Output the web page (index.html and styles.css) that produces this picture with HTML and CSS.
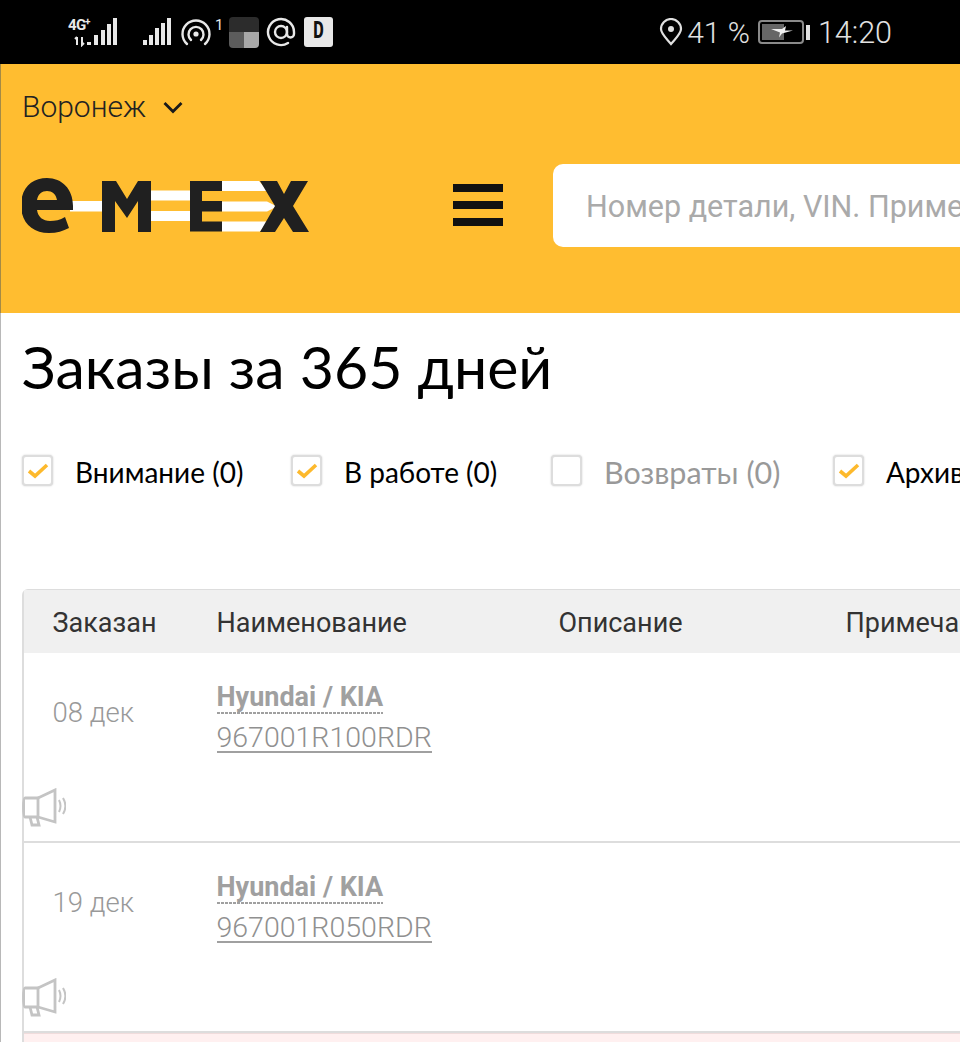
FILE: index.html
```html
<!DOCTYPE html>
<html lang="ru">
<head>
<meta charset="utf-8">
<title>Заказы</title>
<link rel="stylesheet" href="styles.css">
</head>
<body>
<div class="statusbar">
  <div class="status-left">
    <div class="net">
      <span class="net-4g">4G</span><span class="net-plus">+</span>
      <svg class="net-bars" width="50" height="30" viewBox="0 0 50 30"><g fill="#e8e8e8"><rect x="19" y="25" width="4" height="3"/><rect x="26" y="18" width="4" height="10"/><rect x="33" y="13" width="4" height="15"/><rect x="39" y="7" width="4" height="21"/><rect x="45" y="1" width="4" height="27"/></g><path d="M9 28V20M7 22l2-2M14 20v8l2-2" stroke="#e8e8e8" stroke-width="2" fill="none"/></svg>
    </div>
    <svg class="ic-sig" width="30" height="30" viewBox="0 0 30 30"><g fill="#e8e8e8"><rect x="1" y="23" width="4" height="5"/><rect x="7" y="18" width="4" height="10"/><rect x="13" y="11" width="4" height="17"/><rect x="19" y="6" width="4" height="22"/><rect x="25" y="1" width="4" height="27"/></g></svg>
    <svg class="ic-wifi" width="32" height="30" viewBox="0 0 32 30"><g fill="none" stroke="#e8e8e8" stroke-width="2.400" stroke-linecap="round"><path d="M7 27a13.500 13.500 0 1 1 18 0"/><path d="M11 23a7.500 7.500 0 1 1 10 0"/></g><circle cx="16" cy="17" r="2.600" fill="#e8e8e8"/></svg>
    <span class="sup">1</span>
    <div class="tile"><div class="tile-top"></div><div class="tile-bl"></div><div class="tile-br"></div></div>
    <svg class="ic-at" width="30" height="30" viewBox="0 0 30 30"><g fill="none" stroke="#e8e8e8" stroke-width="2.400" stroke-linecap="round"><circle cx="15" cy="15" r="6"/><path d="M21 10v7a3.500 3.500 0 0 0 7 0v-2a13 13 0 1 0-6 11"/></g></svg>
    <div class="dbadge"><span>D</span></div>
  </div>
  <div class="status-right">
    <svg class="ic-pin" width="24" height="28" viewBox="0 0 24 28"><path d="M12 26C6 19 2 15.500 2 11a10 10 0 0 1 20 0c0 4.500-4 8-10 15z" fill="none" stroke="#e0e0e0" stroke-width="2.200"/><circle cx="12" cy="11" r="3" fill="#e0e0e0"/></svg>
    <span class="st-text pct">41 %</span>
    <div class="battery"><div class="battery-fill"></div><svg class="bolt" width="24" height="12" viewBox="0 0 24 12"><path d="M1 3h11l4-3-1 4.500h8l-11 3-3 4 1-5z" fill="#f0f0f0"/></svg></div>
    <div class="battery-tip"></div>
    <span class="st-text time">14:20</span>
  </div>
</div>

<header class="header">
  <div class="city"><span>Воронеж</span>
    <svg width="22" height="14" viewBox="0 0 22 14"><path d="M2.500 3l8.500 8.500L19.500 3" fill="none" stroke="#1a1a1a" stroke-width="2.800"/></svg>
  </div>
  <div class="header-main">
    <svg class="logo" width="288" height="56" viewBox="22 177 288 56">
      <g fill="#fff">
        <rect x="70" y="200" width="34" height="10.500"/>
        <rect x="149" y="189.500" width="43" height="10"/>
        <rect x="149" y="210" width="43" height="10"/>
        <path d="M222 180h37l9 10h-46zM222 200.500h45l10 5-10 5h-45zM222 220.500h46l-8 10h-38z"/>
      </g>
      <g fill="#202020">
        <path d="M47 177c15 0 26 11 26 28v4H37c1 7 6 11 13 11 5 0 10-1 15-4l4 11c-6 3-12 5-20 5-17 0-28-11-28-28s11-27 26-27zm0 13c-5 0-9 3-10 9h20c-1-6-5-9-10-9z"/>
        <path d="M102 180h14l11 18 11-18h13v51h-13v-31l-11 17-12-17v31h-13z"/>
        <path d="M190 180h32v10h-20v10h20v10.500h-20v10h20v10h-32z"/>
        <path d="M260 180h17l7 13 7-13h17l-15 25 16 26h-16l-9-14-9 14h-15l15-26z"/>
      </g>
    </svg>
    <div class="burger"><i></i><i></i><i></i></div>
    <div class="search">Номер детали, VIN. Пример: 21126100708682</div>
  </div>
</header>

<main class="content">
  <h1>Заказы за 365 дней</h1>
  <div class="filters">
    <label class="filter f1"><span class="box"><svg width="22" height="16" viewBox="0 0 22 16"><path d="M2 8l6 5L20 2" fill="none" stroke="#fdb92c" stroke-width="3.600"/></svg></span>Внимание (0)</label>
    <label class="filter f2"><span class="box"><svg width="22" height="16" viewBox="0 0 22 16"><path d="M2 8l6 5L20 2" fill="none" stroke="#fdb92c" stroke-width="3.600"/></svg></span>В работе (0)</label>
    <label class="filter f3"><span class="box"></span>Возвраты (0)</label>
    <label class="filter f4"><span class="box"><svg width="22" height="16" viewBox="0 0 22 16"><path d="M2 8l6 5L20 2" fill="none" stroke="#fdb92c" stroke-width="3.600"/></svg></span>Архив (0)</label>
  </div>
  <div class="table">
    <div class="row head"><div>Заказан</div><div>Наименование</div><div>Описание</div><div>Примечание</div></div>
    <div class="order">
      <div class="row"><div class="date">08 дек</div><div><a class="brand">Hyundai / KIA</a><a class="part">967001R100RDR</a></div></div>
      <svg class="horn" width="44" height="40" viewBox="0 0 44 40"><g fill="none" stroke="#c4c4c4" stroke-width="2.800"><path d="M3 10h13v19H3c-2 0-2-19 0-19z"/><path d="M16 10L33 2v32L16 29"/><path d="M8 29l2 8h7l-2-8"/><path d="M37 12c2 4 2 8 0 12M41 10c3 5 3 11 0 16" stroke-width="2"/></g></svg>
    </div>
    <div class="order">
      <div class="row"><div class="date">19 дек</div><div><a class="brand">Hyundai / KIA</a><a class="part">967001R050RDR</a></div></div>
      <svg class="horn" width="44" height="40" viewBox="0 0 44 40"><g fill="none" stroke="#c4c4c4" stroke-width="2.800"><path d="M3 10h13v19H3c-2 0-2-19 0-19z"/><path d="M16 10L33 2v32L16 29"/><path d="M8 29l2 8h7l-2-8"/><path d="M37 12c2 4 2 8 0 12M41 10c3 5 3 11 0 16" stroke-width="2"/></g></svg>
    </div>
    <div class="order pink"></div>
  </div>
</main>
</body>
</html>
```

FILE: styles.css
```css
* { box-sizing: border-box; }
html, body { margin: 0; height: 1042px; overflow: hidden; background: #fff; }
body { font-family: Roboto, "Noto Sans", sans-serif; color: #111; }

.statusbar { height: 64px; background: #000; display: flex; justify-content: space-between; align-items: center; padding: 0 68px; }
.status-left { display: flex; align-items: center; }
.status-right { display: flex; align-items: center; }
.net { position: relative; width: 50px; height: 30px; }
.net-bars { display: block; }
.net-4g { position: absolute; left: 0; top: 1px; color: #e8e8e8; font-size: 15px; line-height: 15px; font-weight: 700; letter-spacing: -.5px; }
.net-plus { position: absolute; left: 17px; top: 0; color: #e8e8e8; font-size: 10px; line-height: 10px; font-weight: 700; }
.ic-sig { margin-left: 24px; }
.ic-wifi { margin-left: 8px; }
.sup { color: #e8e8e8; font-size: 15px; line-height: 15px; width: 14px; margin: -14px 0 0 3px; }
.tile { width: 30px; height: 31px; border-radius: 4px; overflow: hidden; display: grid; grid-template-columns: 1fr 1fr; grid-template-rows: 15px 16px; }
.tile-top { grid-column: 1 / 3; background: #2c2c2c; }
.tile-bl { background: #5c5c5c; }
.tile-br { background: #a8a8a8; }
.ic-at { margin-left: 7px; }
.dbadge { width: 29px; height: 30px; margin-left: 8px; background: #e8e8e8; border-radius: 3px; color: #111; font: 700 25px/30px "Liberation Mono", monospace; text-align: center; }
.dbadge span { display: inline-block; transform: scaleX(.72); }
.st-text { color: #e2e2e2; font-size: 30.500px; font-weight: 300; line-height: 64px; padding-top: 2px; }
.pct { margin-left: 4px; font-size: 30px; }
.battery { position: relative; width: 46px; height: 24px; margin-left: 8px; border: 2px solid #8a8a8a; border-radius: 4px; padding: 2px; }
.battery-fill { width: 22px; height: 100%; background: #666; }
.bolt { position: absolute; left: 10px; top: 4px; }
.battery-tip { width: 4px; height: 15px; margin-left: 2px; background: #e2e2e2; }
.time { margin-left: 8px; }

.header { height: 249px; background: #ffbd30; border-left: 1px solid #a58a45; padding: 29px 0 0 21px; }
.city { display: flex; align-items: center; gap: 16px; font-size: 30px; font-weight: 300; color: #222; line-height: 28px; }
.header-main { display: flex; align-items: center; margin-top: 43px; }
.logo { flex: none; }
.burger { flex: none; width: 50px; margin-left: 143px; margin-top: -1px; display: flex; flex-direction: column; gap: 9px; }
.burger i { display: block; height: 8px; background: #111; }
.search { flex: none; width: 500px; height: 83px; margin-left: 50px; padding: 2px 0 0 33px; background: #fff; border-radius: 10px 0 0 10px; color: #aaa; font-size: 30.500px; font-weight: 400; line-height: 81px; white-space: nowrap; overflow: hidden; }

.content { border-left: 1px solid #b8b8b8; height: 729px; padding-left: 21px; overflow: hidden; }
h1 { margin: 0; padding-top: 19px; font: 400 59px/70px Lato, sans-serif; color: #000; white-space: nowrap; }
.filters { display: flex; margin-top: 54px; height: 48px; font: 400 28px/32px Lato, sans-serif; color: #000; white-space: nowrap; }
.filter { display: flex; flex: none; align-items: flex-start; }
.filter.f1 { width: 269px; }
.filter.f2 { width: 260px; }
.filter.f3 { width: 282px; color: #999; font-size: 30.500px; }
.box { flex: none; width: 31px; height: 31px; margin: -1px 22px 0 0; background: #fff; border: 2px solid #ddd; border-radius: 4px; display: flex; align-items: center; justify-content: center; box-shadow: 0 0 2px #ccc; }
.table { margin-top: 85px; width: 960px; border-left: 2px solid #ddd; border-top: 1px solid #ddd; border-radius: 6px 0 0 0; }
.row { display: grid; grid-template-columns: 164px 342px 287px 1fr; padding-left: 28.500px; }
.row.head { height: 63px; padding-top: 3px; background: #f0f0f0; align-items: center; font-size: 27px; font-weight: 400; color: #333; white-space: nowrap; }
.order { height: 190px; border-bottom: 2px solid #ddd; position: relative; padding-top: 24px; }
.date { color: #999; font-size: 27.500px; font-weight: 300; line-height: 72px; }
.brand { display: block; width: fit-content; margin-top: 5px; padding-bottom: 2px; font-size: 27px; font-weight: 700; color: #a0a0a0; line-height: 30px; background: repeating-linear-gradient(90deg, #a0a0a0 0 3px, transparent 3px 4px) left bottom / 100% 2px no-repeat; }
.part { display: block; width: fit-content; margin-top: 11px; font-size: 28.500px; font-weight: 300; color: #909090; line-height: 26px; border-bottom: 2px solid #a0a0a0; }
.horn { position: absolute; left: -2px; bottom: 13px; }
.pink { background: #fff0f0; border-top: 1px solid #f0dcdc; }
```
